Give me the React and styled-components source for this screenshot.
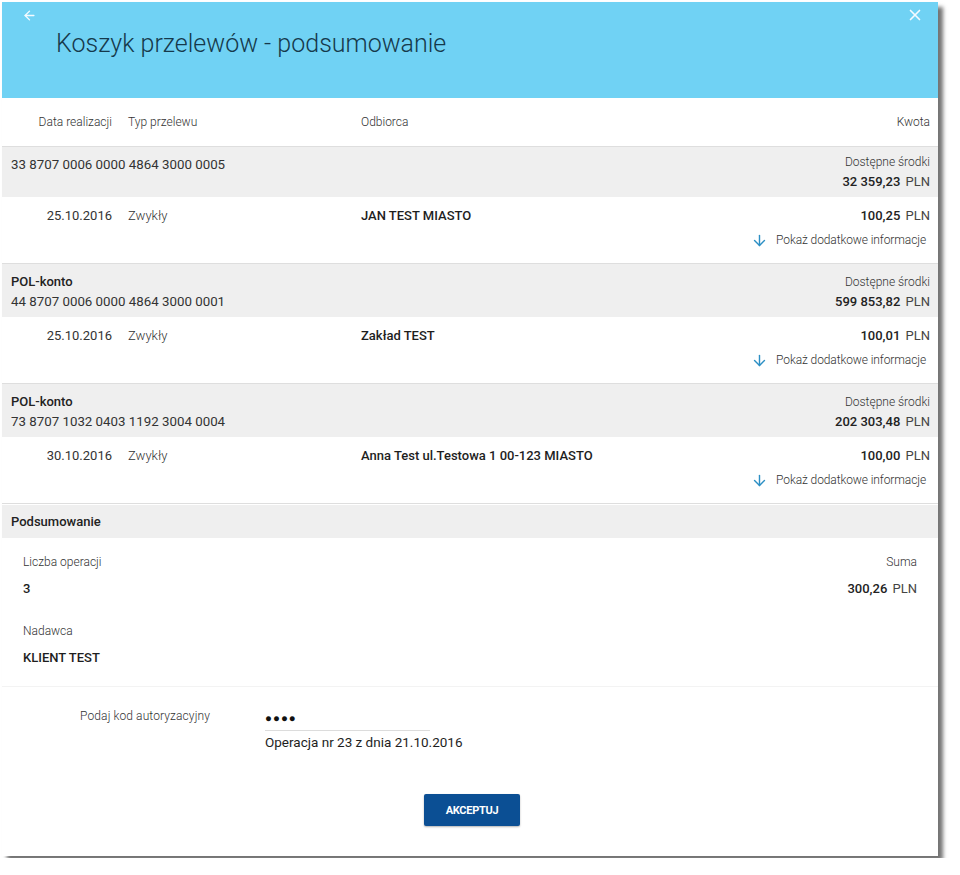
import React from 'react'
import styled, { createGlobalStyle } from 'styled-components'
import { ArrowLeft, X, ArrowDown } from 'lucide-react'

const GlobalStyle = createGlobalStyle`
  body {
    margin: 0;
    background: #ffffff;
    font-family: Roboto, "Noto Sans", Arial, sans-serif;
    color: #2b2b2b;
  }
`

const groups = [
    {
        name: '',
        account: '33 8707 0006 0000 4864 3000 0005',
        available: '32 359,23',
        date: '25.10.2016',
        type: 'Zwykły',
        recipient: 'JAN TEST MIASTO',
        amount: '100,25',
    },
    {
        name: 'POL-konto',
        account: '44 8707 0006 0000 4864 3000 0001',
        available: '599 853,82',
        date: '25.10.2016',
        type: 'Zwykły',
        recipient: 'Zakład TEST',
        amount: '100,01',
    },
    {
        name: 'POL-konto',
        account: '73 8707 1032 0403 1192 3004 0004',
        available: '202 303,48',
        date: '30.10.2016',
        type: 'Zwykły',
        recipient: 'Anna Test ul.Testowa 1 00-123 MIASTO',
        amount: '100,00',
    },
]

const App = () => {
    return (
        <>
            <GlobalStyle />
            <Page>
                <Modal>
                    <Header>
                        <HeaderIcons>
                            <ArrowLeft size={15} strokeWidth={2.2} />
                            <X size={18} strokeWidth={2.2} />
                        </HeaderIcons>
                        <Title>Koszyk przelewów - podsumowanie</Title>
                    </Header>

                    <ColumnsRow>
                        <HeadCell $right>Data realizacji</HeadCell>
                        <HeadCell $indent>Typ przelewu</HeadCell>
                        <HeadCell>Odbiorca</HeadCell>
                        <HeadCell $right>Kwota</HeadCell>
                    </ColumnsRow>

                    {groups.map((g, i) => (
                        <React.Fragment key={i}>
                            <GroupRow $named={!!g.name}>
                                <div>
                                    {g.name && <AccountName>{g.name}</AccountName>}
                                    <AccountNumber $shift={!g.name}>{g.account}</AccountNumber>
                                </div>
                                <Balance>
                                    <LightText>Dostępne środki</LightText>
                                    <Money>
                                        <b>{g.available}</b> PLN
                                    </Money>
                                </Balance>
                            </GroupRow>
                            <TransferRow>
                                <Cell $right>{g.date}</Cell>
                                <Cell $light $indent>{g.type}</Cell>
                                <Cell $bold>{g.recipient}</Cell>
                                <AmountCell>
                                    <Money>
                                        <b>{g.amount}</b> PLN
                                    </Money>
                                    <MoreLink>
                                        <ArrowDown size={17} strokeWidth={2} color="#2c8fc4" />
                                        Pokaż dodatkowe informacje
                                    </MoreLink>
                                </AmountCell>
                            </TransferRow>
                        </React.Fragment>
                    ))}

                    <SummaryBar>Podsumowanie</SummaryBar>
                    <Summary>
                        <SummaryCol>
                            <SummaryItem>
                                <LightText>Liczba operacji</LightText>
                                <Value>3</Value>
                            </SummaryItem>
                            <SummaryItem>
                                <LightText>Nadawca</LightText>
                                <Value>KLIENT TEST</Value>
                            </SummaryItem>
                        </SummaryCol>
                        <SummaryItem $right>
                            <LightText>Suma</LightText>
                            <Value>
                                <Money>
                                    <b>300,26</b> PLN
                                </Money>
                            </Value>
                        </SummaryItem>
                    </Summary>

                    <AuthSection>
                        <AuthRow>
                            <AuthLabel>Podaj kod autoryzacyjny</AuthLabel>
                            <AuthField>
                                <Dots>●●●●</Dots>
                                <OperationInfo>Operacja nr 23 z dnia 21.10.2016</OperationInfo>
                            </AuthField>
                        </AuthRow>
                        <Button>AKCEPTUJ</Button>
                    </AuthSection>
                </Modal>
            </Page>
        </>
    )
}

const Page = styled.div`
    padding: 2px;
`

const Modal = styled.div`
    width: 936px;
    height: 854px;
    background: #ffffff;
    box-shadow: 5px 5px 4px rgba(0, 0, 0, 0.55);
    display: flex;
    flex-direction: column;
`

const Header = styled.div`
    background: #70d2f4;
    height: 96px;
    box-sizing: border-box;
    padding: 4px 14px 0 20px;
`

const HeaderIcons = styled.div`
    display: flex;
    justify-content: space-between;
    align-items: center;
    height: 18px;
    color: #f4fbff;
`

const Title = styled.h1`
    margin: 5px 0 0 34px;
    font-size: 25px;
    line-height: 30px;
    font-weight: 300;
    color: #16394b;
`

const ColumnsRow = styled.div`
    display: grid;
    grid-template-columns: 110px 249px 1fr auto;
    height: 48px;
    padding-right: 8px;
    align-items: center;
    border-bottom: 1px solid #dedede;
`

const HeadCell = styled.div`
    font-size: 12px;
    font-weight: 300;
    color: #333;
    text-align: ${p => (p.$right ? 'right' : 'left')};
    padding-left: ${p => (p.$indent ? '16px' : '0')};
`

const GroupRow = styled.div`
    display: flex;
    justify-content: space-between;
    background: #efefef;
    padding: ${p => (p.$named ? '8px 8px 5px 9px' : '5px 8px 5px 9px')};
    line-height: 20px;
    font-size: 13px;
`

const AccountName = styled.div`
    font-weight: 500;
    color: #222;
`

const AccountNumber = styled.div`
    color: #333;
    font-weight: 400;
    font-size: 13.3px;
    padding-top: ${p => (p.$shift ? '3px' : '0')};
`

const Balance = styled.div`
    text-align: right;
    line-height: 20px;
`

const LightText = styled.div`
    font-weight: 300;
    font-size: 12px;
    color: #333;
`

const Money = styled.span`
    font-size: 13px;
    color: #444;
    font-weight: 400;
    b {
        font-weight: 500;
        color: #222;
        margin-right: 2px;
    }
`

const TransferRow = styled.div`
    display: grid;
    grid-template-columns: 110px 249px 1fr auto;
    padding: 9px 8px 13px 0;
    border-bottom: 1px solid #dedede;
    font-size: 13px;
    line-height: 20px;
`

const Cell = styled.div`
    text-align: ${p => (p.$right ? 'right' : 'left')};
    padding-left: ${p => (p.$indent ? '16px' : '0')};
    font-weight: ${p => (p.$bold ? 500 : p.$light ? 300 : 400)};
    color: ${p => (p.$bold ? '#1e1e1e' : '#333')};
`

const AmountCell = styled.div`
    display: flex;
    flex-direction: column;
    align-items: flex-end;
`

const MoreLink = styled.div`
    display: flex;
    align-items: center;
    gap: 8px;
    margin-top: 4px;
    margin-right: 4px;
    font-size: 12px;
    letter-spacing: -0.1px;
    font-weight: 300;
    color: #333;
`

const SummaryBar = styled.div`
    background: #efefef;
    height: 33px;
    line-height: 33px;
    margin-top: 1px;
    padding-left: 9px;
    font-size: 13px;
    font-weight: 500;
    color: #222;
`

const Summary = styled.div`
    display: flex;
    justify-content: space-between;
    padding: 14px 21px 18px 21px;
    border-bottom: 1px solid #f3f3f3;
`

const SummaryCol = styled.div`
    display: flex;
    flex-direction: column;
    gap: 22px;
`

const SummaryItem = styled.div`
    display: flex;
    flex-direction: column;
    gap: 7px;
    line-height: 20px;
    align-items: ${p => (p.$right ? 'flex-end' : 'flex-start')};
`

const Value = styled.div`
    font-size: 13px;
    font-weight: 500;
    color: #1e1e1e;
`

const AuthSection = styled.div`
    flex: 1;
    display: flex;
    flex-direction: column;
    align-items: center;
    padding-top: 19px;
`

const AuthRow = styled.div`
    align-self: stretch;
    display: flex;
    gap: 55px;
`

const AuthLabel = styled.div`
    width: 208px;
    text-align: right;
    font-size: 12px;
    letter-spacing: 0.1px;
    font-weight: 300;
    color: #333;
    line-height: 20px;
`

const AuthField = styled.div`
    display: flex;
    flex-direction: column;
`

const Dots = styled.div`
    width: 165px;
    font-size: 11.5px;
    letter-spacing: 1px;
    line-height: 24px;
    color: #111;
    border-bottom: 1px solid #dcdcdc;
`

const OperationInfo = styled.div`
    font-size: 13.5px;
    line-height: 20px;
    color: #1e1e1e;
    margin-top: 1px;
`

const Button = styled.button`
    margin-top: 42px;
    margin-left: 4px;
    width: 96px;
    height: 32px;
    border: none;
    border-radius: 2px;
    background: #0b4f94;
    color: #ffffff;
    font-family: Roboto, Arial, sans-serif;
    font-size: 11px;
    font-weight: 700;
    letter-spacing: -0.3px;
    box-shadow: 0 1px 2px rgba(0, 0, 0, 0.3);
`

export default App
